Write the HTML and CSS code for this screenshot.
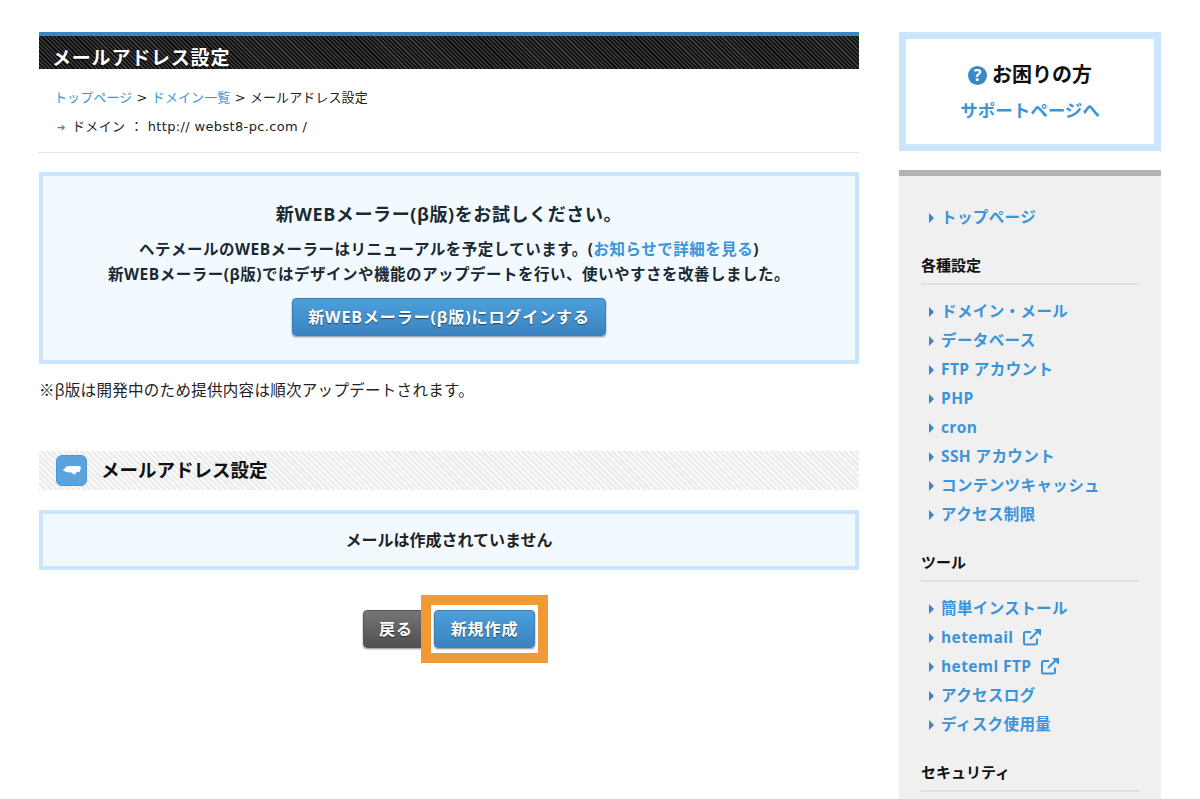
FILE: index.html
```html
<!DOCTYPE html>
<html lang="ja">
<head>
  <meta charset="UTF-8">
  <meta name="viewport" content="width=device-width, initial-scale=1">
  <title>メールアドレス設定</title>
  <link rel="stylesheet" href="styles.css">
</head>
<body>
  <div class="wrap">

    <main class="content">
      <h1 class="page-title">メールアドレス設定</h1>

      <p class="crumbs"><a href="#">トップページ</a> &gt; <a href="#">ドメイン一覧</a> &gt; メールアドレス設定</p>
      <p class="domain"><span class="domain-arrow">➔</span>ドメイン ： http:// webst8-pc.com /</p>

      <section class="notice">
        <h2>新WEBメーラー(β版)をお試しください。</h2>
        <p>ヘテメールのWEBメーラーはリニューアルを予定しています。(<a href="#">お知らせで詳細を見る</a>)<br>
        新WEBメーラー(β版)ではデザインや機能のアップデートを行い、使いやすさを改善しました。</p>
        <a class="btn btn-blue btn-login" href="#">新WEBメーラー(β版)にログインする</a>
      </section>
      <p class="note">※β版は開発中のため提供内容は順次アップデートされます。</p>

      <h2 class="section-title">
        <span class="section-icon">
          <svg width="18" height="9" viewBox="0 0 18 9"><path d="M3.500.5C6 0 13 0 16.500.3c1 .1 1.500.8 1.300 1.700l-.6 2.500c-.3 1-1 1.500-2 1.500h-1.500c-.6 1-1.300 2.500-2.400 2.500-1 0-1.300-1-2.300-1.500-1.300-.6-3-.6-4.500-.7C2.500 6.200 1.800 5 1 4.700L0 4.300c.1-1 1.500-1.300 2-2z" fill="#fff"/></svg>
        </span>
        <span class="section-text">メールアドレス設定</span>
      </h2>

      <div class="empty-box">メールは作成されていません</div>

      <div class="actions">
        <a class="btn btn-gray" href="#">戻る</a>
        <a class="btn btn-blue btn-new" href="#">新規作成</a>
      </div>
    </main>

    <aside class="side">
      <div class="help">
        <div class="help-title"><span class="help-icon">?</span>お困りの方</div>
        <a class="help-link" href="#">サポートページへ</a>
      </div>

      <nav class="side-nav">
        <ul class="side-first">
          <li><a href="#">トップページ</a></li>
        </ul>

        <h3>各種設定</h3>
        <ul>
          <li><a href="#">ドメイン・メール</a></li>
          <li><a href="#">データベース</a></li>
          <li><a href="#">FTP アカウント</a></li>
          <li><a href="#">PHP</a></li>
          <li><a href="#">cron</a></li>
          <li><a href="#">SSH アカウント</a></li>
          <li><a href="#">コンテンツキャッシュ</a></li>
          <li><a href="#">アクセス制限</a></li>
        </ul>

        <h3>ツール</h3>
        <ul>
          <li><a href="#">簡単インストール</a></li>
          <li><a href="#">hetemail
            <svg class="ext" width="18" height="18" viewBox="0 0 18 18"><path d="M14 10.500V15a1.500 1.500 0 0 1-1.500 1.500h-10A1.500 1.500 0 0 1 1 15V5.500A1.500 1.500 0 0 1 2.500 4H8" fill="none" stroke="#3b94d9" stroke-width="2"/><path d="M7 11L15 3" fill="none" stroke="#3b94d9" stroke-width="2.200"/><path d="M11 1h7v7z" fill="#3b94d9"/></svg>
          </a></li>
          <li><a href="#">heteml FTP
            <svg class="ext" width="18" height="18" viewBox="0 0 18 18"><path d="M14 10.500V15a1.500 1.500 0 0 1-1.500 1.500h-10A1.500 1.500 0 0 1 1 15V5.500A1.500 1.500 0 0 1 2.500 4H8" fill="none" stroke="#3b94d9" stroke-width="2"/><path d="M7 11L15 3" fill="none" stroke="#3b94d9" stroke-width="2.200"/><path d="M11 1h7v7z" fill="#3b94d9"/></svg>
          </a></li>
          <li><a href="#">アクセスログ</a></li>
          <li><a href="#">ディスク使用量</a></li>
        </ul>

        <h3>セキュリティ</h3>
      </nav>
    </aside>

  </div>
</body>
</html>
```

FILE: styles.css
```css
html, body {
  height: 799px;
  overflow: hidden;
}

body {
  margin: 0;
  background-color: white;
  color: #222;
  font-family: "Open Sans", "Noto Sans CJK JP", sans-serif;
  font-size: 13px;
}

a {
  color: #3b94d9;
  text-decoration: none;
}

p, h1, h2, h3, ul {
  margin: 0;
  padding: 0;
}

.wrap {
  display: flex;
  gap: 40px;
  padding: 32px 39px 0;
  height: 767px;
  overflow: hidden;
}

.content {
  width: 820px;
  flex: none;
}

.page-title {
  box-sizing: border-box;
  height: 37px;
  border-top: 4px solid #3a87c8;
  padding: 11px 0 0 13px;
  background: repeating-linear-gradient(45deg, #0d0d0d 0, #0d0d0d 1.500px, #3a3a3a 1.500px, #3a3a3a 3px);
  color: white;
  font-size: 19px;
  letter-spacing: 0.8px;
  line-height: 22px;
  text-shadow: 0 1px 1px #000;
}

.crumbs {
  margin: 19px 0 0 15px;
  font-family: "DejaVu Sans", "Noto Sans CJK JP", sans-serif;
  letter-spacing: 0.1px;
  line-height: 20px;
}

.domain {
  height: 35px;
  margin-top: 9px;
  padding-left: 18px;
  font-family: "DejaVu Sans", "Noto Sans CJK JP", sans-serif;
  line-height: 20px;
  letter-spacing: 0.35px;
  border-bottom: 1px dotted #ccc;
}

.domain-arrow {
  display: inline-block;
  width: 15px;
  color: #3a87c8;
  font-size: 10px;
  font-weight: bold;
}

.notice {
  margin-top: 19px;
  height: 192px;
  box-sizing: border-box;
  border: 4px solid #cce5ff;
  background-color: #f3faff;
  text-align: center;
}

.notice h2 {
  margin-top: 26px;
  font-size: 18px;
  letter-spacing: 0.6px;
  line-height: 24px;
  color: #1a2a33;
}

.notice p {
  margin-top: 11px;
  font-size: 15.500px;
  font-weight: bold;
  letter-spacing: 0.5px;
  line-height: 25px;
  color: #1a2a33;
}

.btn {
  display: inline-block;
  box-sizing: border-box;
  height: 38px;
  border-radius: 4px;
  color: white;
  font-size: 16px;
  font-weight: bold;
  line-height: 36px;
  text-align: center;
  text-shadow: 0 1px 1px rgba(0, 0, 0, 0.5);
  letter-spacing: 0.9px;
  box-shadow: 0 1px 2px rgba(0, 0, 0, 0.45);
}

.btn-blue {
  background: linear-gradient(#4c9fdb, #3a83c0);
  border: 1px solid #3a7fb8;
}

.btn-gray {
  width: 66px;
  background: linear-gradient(#757575, #505050);
  border: 1px solid #555;
}

.btn-login {
  width: 314px;
  margin-top: 11px;
}

.note {
  margin-top: 15px;
  font-size: 15.500px;
  letter-spacing: 0.3px;
  line-height: 22px;
  color: #222;
}

.section-title {
  display: flex;
  align-items: center;
  gap: 14px;
  height: 39px;
  margin-top: 50px;
  padding-left: 17px;
  background: repeating-linear-gradient(45deg, #ebebeb 0, #ebebeb 2px, #f9f9f9 2px, #f9f9f9 4px);
  color: #111;
  font-size: 18.500px;
}

.section-text {
  margin-bottom: 3px;
}

.section-icon {
  display: flex;
  align-items: center;
  justify-content: center;
  box-sizing: border-box;
  width: 31px;
  height: 31px;
  border: 1px solid #4f97d2;
  border-radius: 6px;
  background-color: #5aa3dc;
}

.empty-box {
  margin-top: 20px;
  height: 60px;
  box-sizing: border-box;
  border: 4px solid #cce5ff;
  background-color: #f3faff;
  font-size: 16px;
  font-weight: bold;
  line-height: 52px;
  text-align: center;
  color: #222;
}

.actions {
  display: flex;
  justify-content: center;
  gap: 5px;
  margin-top: 40px;
}

.btn-new {
  position: relative;
  width: 101px;
}

/* orange frame drawn over the buttons */
.btn-new::after {
  content: "";
  position: absolute;
  top: -16px;
  left: -14px;
  right: -14px;
  bottom: -16px;
  border: 10px solid #f09a35;
}

.side {
  width: 262px;
  flex: none;
}

.help {
  height: 119px;
  box-sizing: border-box;
  border: 7px solid #cce5ff;
  text-align: center;
}

.help-title {
  display: flex;
  justify-content: center;
  align-items: center;
  gap: 5px;
  margin-top: 22px;
  font-size: 20px;
  font-weight: bold;
  line-height: 28px;
  color: #111;
}

.help-icon {
  width: 19px;
  height: 19px;
  border-radius: 50%;
  background-color: #3a87c8;
  color: white;
  font-size: 16px;
  line-height: 19px;
}

.help-link {
  display: block;
  margin-top: 9px;
  font-size: 17.500px;
  font-weight: bold;
  line-height: 24px;
}

.side-nav {
  height: 700px;
  margin-top: 19px;
  padding: 0 22px;
  border-top: 6px solid #b3b3b3;
  background-color: #f0f0f0;
}

.side-nav h3 {
  height: 29px;
  margin-top: 22px;
  border-bottom: 2px solid #e0e0e0;
  font-size: 15px;
  line-height: 22px;
  color: #111;
}

.side-nav ul {
  list-style: none;
  margin-top: 12px;
}

.side-nav .side-first {
  margin-top: 27px;
}

.side-nav li {
  position: relative;
  height: 29px;
  padding-left: 20px;
  font-size: 15.500px;
  font-weight: bold;
  line-height: 29px;
  letter-spacing: 0.4px;
}

.side-nav li::before {
  content: "";
  position: absolute;
  left: 8px;
  top: 10px;
  border-left: 5px solid #3a87c8;
  border-top: 5px solid transparent;
  border-bottom: 5px solid transparent;
}

.ext {
  margin-left: 5px;
  vertical-align: -3px;
}
```
